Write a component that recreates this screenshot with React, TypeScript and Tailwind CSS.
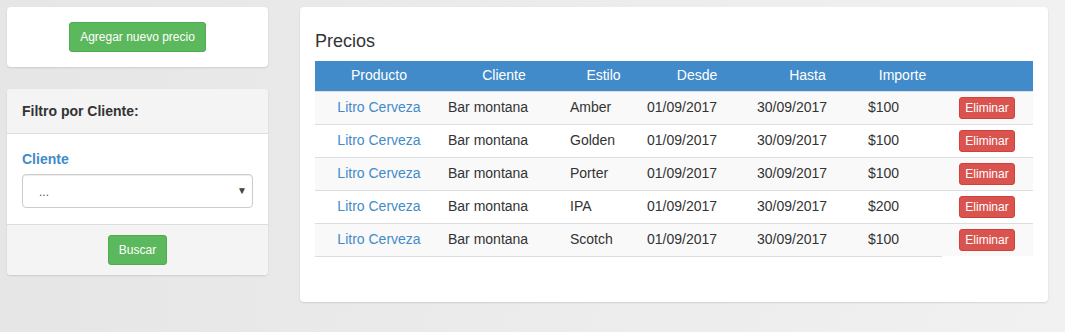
const rows = [
  { estilo: "Amber", importe: "$100" },
  { estilo: "Golden", importe: "$100" },
  { estilo: "Porter", importe: "$100" },
  { estilo: "IPA", importe: "$200" },
  { estilo: "Scotch", importe: "$100" },
];

const heads = ["Producto", "Cliente", "Estilo", "Desde", "Hasta", "Importe", ""];
const widths = ["w-[128px]", "w-[122px]", "w-[77px]", "w-[110px]", "w-[111px]", "w-[79px]", "w-[91px]"];

export default function App() {
  return (
    <div className="flex h-[332px] gap-[32px] bg-gradient-to-r from-[#e6e6e6] to-[#f1f1f1] pl-[7px] pt-[7px] font-['Liberation_Sans',Arial,sans-serif] text-[14px] text-[#333]">
      <div className="flex w-[261px] flex-col gap-[22px]">
        <div className="flex h-[60px] items-center justify-center rounded-[4px] bg-white shadow-[0_1px_2px_rgba(0,0,0,0.12)]">
          <button className="h-[30px] rounded-[3px] border border-[#4cae4c] bg-[#5cb85c] px-[10px] text-[12px] text-white">
            Agregar nuevo precio
          </button>
        </div>
        <div className="overflow-hidden rounded-[4px] bg-white shadow-[0_1px_2px_rgba(0,0,0,0.12)]">
          <div className="flex h-[45px] items-center border-b border-[#ddd] bg-[#f4f4f4] px-[15px] font-bold">
            Filtro por Cliente:
          </div>
          <div className="flex h-[90px] flex-col px-[15px] pt-[15px]">
            <label className="mb-[5px] font-bold leading-[20px] text-[#428bca]">Cliente</label>
            <div className="relative flex h-[34px] items-center rounded-[4px] border border-[#ccc] bg-white pl-[16px] text-[#6b4f45] shadow-[inset_0_1px_1px_rgba(0,0,0,0.075)]">
              <span className="mt-[2px] text-[12px]">...</span>
              <span className="absolute right-[5px] top-[8px] text-[10px] text-[#444]">▼</span>
            </div>
          </div>
          <div className="flex h-[51px] items-center justify-center border-t border-[#ddd] bg-[#f4f4f4]">
            <button className="h-[30px] rounded-[3px] border border-[#4cae4c] bg-[#5cb85c] px-[10px] text-[12px] text-white">
              Buscar
            </button>
          </div>
        </div>
      </div>
      <div className="h-[295px] w-[748px] rounded-[4px] bg-white px-[15px] shadow-[0_1px_2px_rgba(0,0,0,0.12)]">
        <h3 className="pb-[9px] pt-[24px] text-[18px] leading-[21px] text-[#333]">Precios</h3>
        <table className="w-[718px] table-fixed border-collapse">
          <thead>
            <tr className="h-[30px] bg-[#428bca] text-white">
              {heads.map((h, i) => (
                <th key={i} className={`${widths[i]} p-0 text-center font-normal`}>
                  {h}
                </th>
              ))}
            </tr>
          </thead>
          <tbody>
            {rows.map((r, i) => {
              const last = i === rows.length - 1;
              const bb = last ? "border-b border-[#ddd]" : "";
              return (
                <tr key={i} className={`h-[33px] ${i % 2 === 0 ? "bg-[#f9f9f9]" : "bg-white"}`}>
                  <td className={`border-t border-[#ddd] p-0 text-center text-[#428bca] ${bb}`}>Litro Cerveza</td>
                  <td className={`border-t border-[#ddd] p-0 pl-[5px] ${bb}`}>Bar montana</td>
                  <td className={`border-t border-[#ddd] p-0 pl-[5px] ${bb}`}>{r.estilo}</td>
                  <td className={`border-t border-[#ddd] p-0 pl-[5px] ${bb}`}>01/09/2017</td>
                  <td className={`border-t border-[#ddd] p-0 pl-[5px] ${bb}`}>30/09/2017</td>
                  <td className={`border-t border-[#ddd] p-0 pl-[5px] ${bb}`}>{r.importe}</td>
                  <td className="border-t border-[#ddd] p-0 pr-[1px] text-center">
                    <button className="h-[22px] rounded-[3px] border border-[#d43f3a] bg-[#d9534f] px-[5px] text-[12px] leading-[18px] text-white">
                      Eliminar
                    </button>
                  </td>
                </tr>
              );
            })}
          </tbody>
        </table>
      </div>
    </div>
  );
}
